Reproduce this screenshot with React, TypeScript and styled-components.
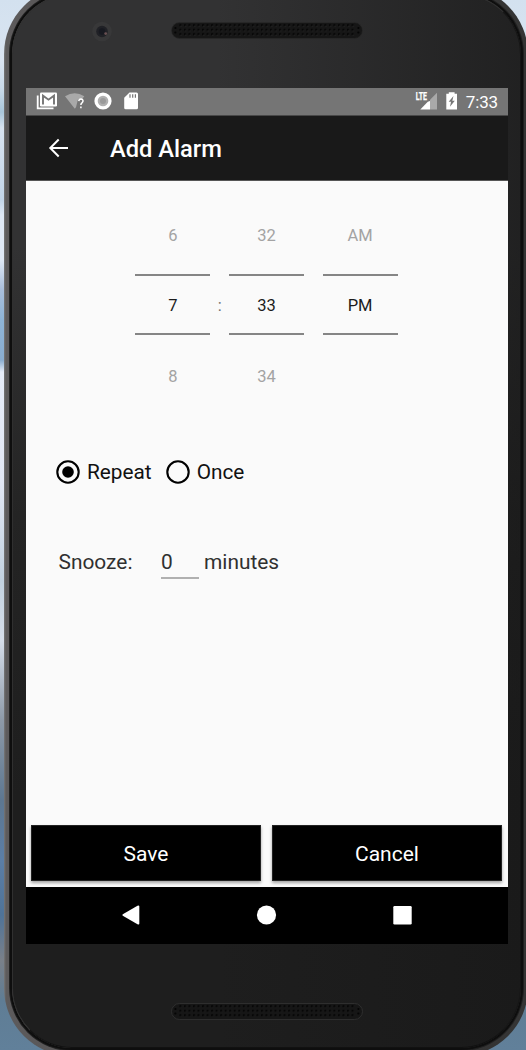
import React from "react";
import styled, { createGlobalStyle } from "styled-components";

const GlobalStyle = createGlobalStyle`
  * { box-sizing: border-box; }
  body { margin: 0; font-family: Roboto, "Liberation Sans", sans-serif; }
`;

const Desktop = styled.main`
  width: 526px;
  height: 1050px;
  overflow: hidden;
  display: flex;
  align-items: flex-start;
  background: linear-gradient(180deg, #d3e1ef 0, #dae4f1 60px, #c8d9e8 90px, #a9c6da 112px, #d8e3f0 128px, #c3d5e8 200px, #dfe8f5 215px, #dfe8f5 260px, #a9bedb 290px, #8eb4d6 320px, #8aadd0 360px, #e6ecf8 372px, #e2e7f4 480px, #c3d2e0 580px, #d6deea 640px, #8e9aa8 720px, #5d7791 800px, #5b7ea6 860px, #4f7398 915px, #7a8089 960px, #5f7d95 1000px, #61809a 1050px);
`;

const Device = styled.div`
  flex: none;
  width: 524px;
  height: 1070px;
  margin: -14px 0 0 4px;
  padding: 8px;
  border-radius: 68px;
  background: linear-gradient(90deg, #777 0, #5d5b5c 2px, #575556 60px, #3a3939 110px, #303030 400px, #353535 521px, #2b2b2b 524px);
`;

const Face = styled.div`
  width: 509px;
  height: 1054px;
  border-radius: 60px;
  border: 1px solid #303030;
  border-right-color: #151515;
  border-bottom-color: #111;
  box-shadow: 0 0 0 2px #0e0e0e, 0 0 0 3px #202020;
  padding: 93px 0 0 13px;
  display: flex;
  flex-direction: column;
  position: relative;
  background:
    linear-gradient(90deg, transparent 40%, rgba(24, 24, 24, 0.65) 100%),
    linear-gradient(180deg, #323233 0, #323233 250px, #242424 520px, #1e1e1e 800px, #1e1e1e 100%);
`;

const Grille = styled.svg<{ $top: number }>`
  position: absolute;
  left: 158px;
  top: ${(p) => p.$top}px;
`;

const Camera = styled.svg`
  position: absolute;
  left: 79px;
  top: 26px;
`;

const Screen = styled.section`
  width: 482px;
  height: 856px;
  display: flex;
  flex-direction: column;
  background: #fafafa;
`;

const StatusBar = styled.div`
  height: 28px;
  flex: none;
  display: flex;
  justify-content: space-between;
  align-items: center;
  padding: 0 10px;
  background: #757575;
  border-bottom: 1px solid #484848;
  color: #fff;
`;

const StatusGroup = styled.div`
  display: flex;
  align-items: center;
  height: 27px;
`;

const Clock = styled.span`
  font-size: 17px;
  line-height: 27px;
  letter-spacing: -0.15px;
  padding-top: 1px;
  margin-left: 8px;
`;

const AppBar = styled.header`
  height: 65px;
  flex: none;
  display: flex;
  align-items: center;
  padding-left: 22px;
  background: #191919;
  border-bottom: 1px solid #555;
`;

const BackButton = styled.button`
  border: 0;
  padding: 0;
  background: none;
  display: flex;
  width: 62px;
`;

const Title = styled.h1`
  margin: 0;
  padding-top: 2px;
  color: #fff;
  font-size: 23.7px;
  line-height: 30px;
  font-weight: 500;
  white-space: nowrap;
`;

const Content = styled.div`
  flex: 1;
  display: flex;
  flex-direction: column;
`;

const TimePicker = styled.div`
  display: flex;
  padding: 20px 0 0 109.4px;
  height: 230px;
`;

const Wheel = styled.div`
  width: 75px;
  display: flex;
  flex-direction: column;
  font-size: 16.5px;
  text-align: center;
`;

const Neighbour = styled.div`
  height: 73px;
  line-height: 69px;
  color: #a3a3a3;
  &:last-child { line-height: 84px; }
`;

const Chosen = styled.div`
  height: 61px;
  line-height: 60px;
  color: #1c1c1c;
  border: solid #858585;
  border-width: 2px 0;
`;

const Separator = styled.div`
  width: 18.6px;
  text-align: center;
  font-size: 16.5px;
  line-height: 210px;
  color: #707070;
`;

const RadioRow = styled.div`
  display: flex;
  align-items: center;
  height: 30px;
  margin: 46px 0 0 30px;
`;

const RadioLabel = styled.label`
  display: flex;
  align-items: center;
  gap: 7px;
  margin-right: 14px;
  font-size: 20.8px;
  line-height: 30px;
  color: #111;
`;

const SnoozeRow = styled.div`
  display: flex;
  height: 32px;
  margin: 59px 0 0 32.5px;
  font-size: 20.9px;
  line-height: 32px;
  color: #303030;
`;

const SnoozeLabel = styled.span`
  width: 102.5px;
`;

const SnoozeField = styled.span`
  width: 38px;
  height: 33px;
  margin-right: 5px;
  border-bottom: 2px solid #b0b0b0;
`;

const Actions = styled.div`
  display: grid;
  grid-template-columns: 230px 230px;
  gap: 11px;
  margin-top: auto;
  padding: 0 0 6px 5px;
`;

const ActionButton = styled.button`
  height: 56px;
  border: 1px solid #222;
  padding: 2px 0 0;
  background: #000;
  color: #fff;
  font-family: inherit;
  font-size: 21px;
  line-height: 52px;
  box-shadow: 0 2px 3px rgba(0, 0, 0, 0.35);
`;

const NavBar = styled.nav`
  height: 57px;
  flex: none;
  display: flex;
  background: #000;
`;

const Speaker = ({ id, top, hole, shine }: { id: string; top: number; hole: string; shine: string }) => (
  <Grille $top={top} width="192" height="19" viewBox="0 0 192 19">
    <defs>
      <pattern id={id} width="4.53" height="4.5" x="7.5" y="2.4" patternUnits="userSpaceOnUse">
        <circle cx="1.9" cy="1.9" r="1.15" fill="#050505" />
        <circle cx="2.6" cy="2.7" r=".55" fill={hole} />
      </pattern>
    </defs>
    <rect x=".5" y="1.5" width="191" height="16" rx="8" fill="#161616" stroke={shine} strokeWidth=".7" />
    <rect x="7.5" y="2.4" width="177" height="13.5" fill={`url(#${id})`} />
    {[4, 187].map((x) => (
      <g key={x} fill="#050505">
        <circle cx={x + 0.4} cy="7" r="1.1" />
        <circle cx={x + 0.4} cy="11.5" r="1.1" />
      </g>
    ))}
  </Grille>
);

const Radio = ({ checked }: { checked?: boolean }) => (
  <svg width="24" height="24" viewBox="0 0 24 24">
    <circle cx="12" cy="12" r="10.7" fill="none" stroke="#000" strokeWidth="2.1" />
    {checked && <circle cx="12" cy="12" r="5.8" fill="#000" />}
  </svg>
);

const NotificationIcons = () => (
  <svg width="104" height="27" viewBox="36 88 104 27">
    <path d="M37.7 95.5V108.300H53.500" fill="none" stroke="#fff" strokeWidth="1.8" />
    <rect x="40" y="92.500" width="17" height="14" rx="1.300" fill="#fff" />
    <path d="M43 104.600V95.700L48.500 99.700L54 95.700V104.600" fill="none" stroke="#757575" strokeWidth="1.900" />
    <path d="M65 96.300Q74.800 90 84.300 96.300L82 99.200H78L76 107.300L74.800 108.700Z" fill="#a9a9a9" />
    <path d="M78.800 101.100Q79 99 81 99Q83.200 99.200 83 101.200Q82.800 102.200 81.700 103.100Q80.900 103.700 80.900 105M80.900 106.500V108.200" fill="none" stroke="#fff" strokeWidth="1.500" />
    <circle cx="103" cy="101" r="8.600" fill="#fff" />
    <circle cx="103" cy="101" r="5.300" fill="#b0b0b0" />
    <circle cx="103" cy="101" r="3" fill="#9a9a9a" />
    <path d="M129.500 92.500H136.500Q138 92.500 138 94V107.800Q138 109.300 136.500 109.300H125.700Q124.200 109.300 124.200 107.800V97.800Z" fill="#fff" />
    <path d="M130 94.300V97.700M132.700 94.300V97.700M135.400 94.300V97.700" stroke="#757575" strokeWidth="1.200" />
  </svg>
);

const SystemIcons = () => (
  <svg width="44" height="27" viewBox="414 88 44 27">
    <path d="M437 92.800V109.500H430V99.800Z" fill="#a9a9a9" />
    <path d="M430 101V109.500H420.300L427.800 101.800Z" fill="#fff" />
    <text x="415.700" y="100.200" fill="#fff" stroke="#fff" strokeWidth=".25" fontSize="10.300" fontWeight="700" textLength="11.300" lengthAdjust="spacingAndGlyphs">LTE</text>
    <path d="M446.300 93.800H448.800V92.300H454.600V93.800H457V109.500H446.300Z" fill="#fff" />
    <path d="M453.500 96L448.700 101.800H451L450 106.700L454.800 100.700H452.300Z" fill="#757575" />
  </svg>
);

export default function App() {
  return (
    <>
      <GlobalStyle />
      <Desktop>
        <Device>
          <Face>
            <Camera width="20" height="22" viewBox="0 0 20 22">
              <circle cx="10" cy="10.500" r="9.800" fill="#383839" />
              <circle cx="10" cy="10.500" r="5.800" fill="#202126" />
              <circle cx="10" cy="10.500" r="3.200" fill="#171920" />
              <circle cx="13.700" cy="12.600" r="1.400" fill="#695052" />
            </Camera>
            <Speaker id="top-holes" top={26} hole="#343434" shine="#292929" />
            <Screen>
              <StatusBar>
                <StatusGroup><NotificationIcons /></StatusGroup>
                <StatusGroup><SystemIcons /><Clock>7:33</Clock></StatusGroup>
              </StatusBar>
              <AppBar>
                <BackButton aria-label="Back">
                  <svg width="22" height="22" viewBox="0 0 22 22" fill="none" stroke="#fff" strokeWidth="2">
                    <path d="M20 11H3M10.700 2.500L2.300 11L10.700 19.500" />
                  </svg>
                </BackButton>
                <Title>Add Alarm</Title>
              </AppBar>
              <Content>
                <TimePicker>
                  <Wheel><Neighbour>6</Neighbour><Chosen>7</Chosen><Neighbour>8</Neighbour></Wheel>
                  <Separator>:</Separator>
                  <Wheel><Neighbour>32</Neighbour><Chosen>33</Chosen><Neighbour>34</Neighbour></Wheel>
                  <Separator />
                  <Wheel><Neighbour>AM</Neighbour><Chosen>PM</Chosen><Neighbour /></Wheel>
                </TimePicker>
                <RadioRow>
                  <RadioLabel><Radio checked />Repeat</RadioLabel>
                  <RadioLabel><Radio />Once</RadioLabel>
                </RadioRow>
                <SnoozeRow>
                  <SnoozeLabel>Snooze:</SnoozeLabel>
                  <SnoozeField>0</SnoozeField>
                  <span>minutes</span>
                </SnoozeRow>
                <Actions>
                  <ActionButton>Save</ActionButton>
                  <ActionButton>Cancel</ActionButton>
                </Actions>
              </Content>
              <NavBar>
                <svg width="482" height="57" viewBox="26 887 482 57" fill="#fff">
                  <path d="M122.800 914.300L137.500 905.700Q139.300 905 139.300 906.500V923.500Q139.300 925.200 137.500 924.300L122.800 915.700Q121.800 915 122.800 914.300Z" />
                  <circle cx="266.500" cy="915" r="9.600" />
                  <rect x="393.300" y="906" width="18.400" height="18.400" rx="1.200" />
                </svg>
              </NavBar>
            </Screen>
            <Speaker id="bottom-holes" top={1007} hole="#1b1b1b" shine="#383838" />
          </Face>
        </Device>
      </Desktop>
    </>
  );
}
